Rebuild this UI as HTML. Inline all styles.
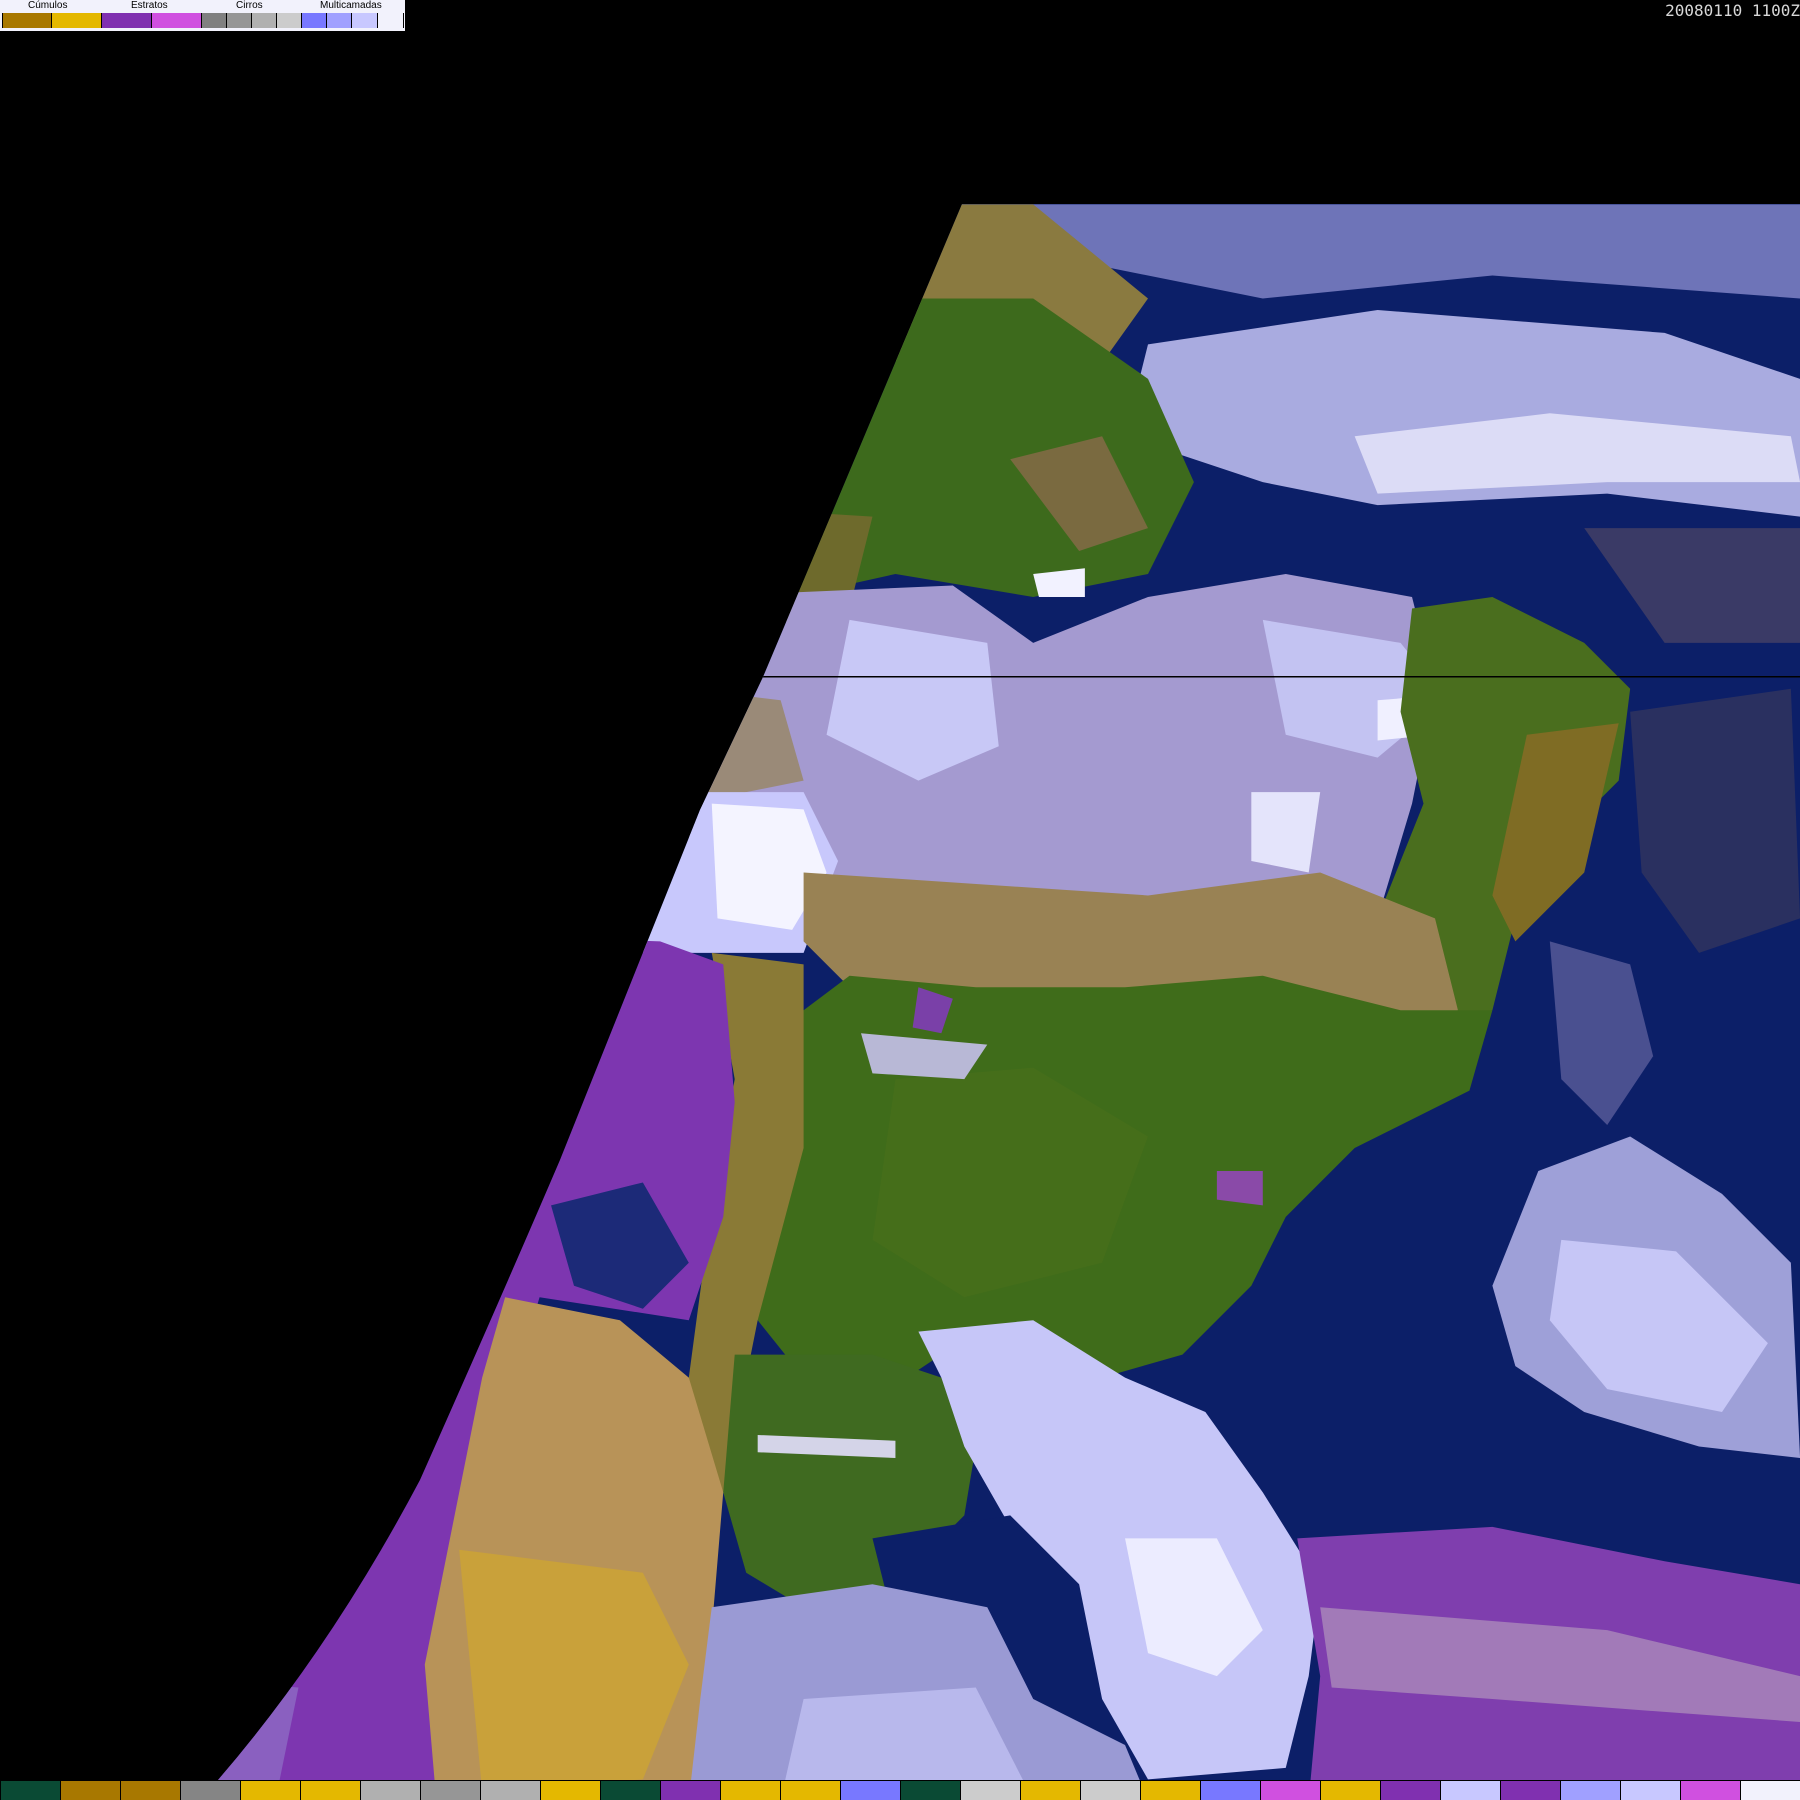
<!DOCTYPE html>
<html><head><meta charset="utf-8"><style>
html,body{margin:0;padding:0;background:#000;width:1800px;height:1800px;overflow:hidden;font-family:"Liberation Sans",sans-serif}
#legend{position:absolute;left:0;top:0;width:405px;height:31px;background:#f2f2fc}
#legend .t{position:absolute;top:0;font-size:10px;color:#000}
#legend .sw{position:absolute;top:13px;height:15px;border-left:1px solid #000}
#bar{position:absolute;left:0;top:1781px;width:1800px;height:19px;display:flex}
#bar div{width:60px;height:19px;box-sizing:border-box;border-left:1px solid #000}
#date{position:absolute;right:0;top:1px;color:#d8d8d8;font-family:"DejaVu Sans Mono","Liberation Mono",monospace;font-size:16px}
svg{position:absolute;left:0;top:0}
</style></head><body>
<svg width="1800" height="1800" viewBox="0 0 1800 1800">
<defs>
<clipPath id="c"><path d="M962,204 L1800,204 L1800,1780 L218,1780 Q330,1650 420,1480 Q500,1300 560,1160 Q620,1010 700,810 L763,677 Z"/></clipPath>
</defs>
<g clip-path="url(#c)">
<g transform="scale(1.148)">
<rect x="0" y="0" width="1568" height="1568" fill="#0c1f68"/>
<path d="M838,178 L1568,178 L1568,260 L1300,240 L1100,260 L950,230 L880,260 Z" fill="#6e74b8"/>
<path d="M1000,300 L1200,270 L1450,290 L1568,330 L1568,450 L1400,430 L1200,440 L1100,420 L980,380 Z" fill="#a9abe0"/>
<path d="M1180,380 L1350,360 L1560,380 L1568,420 L1400,420 L1200,430 Z" fill="#dcdcf6"/>
<path d="M700,178 L900,178 L1000,260 L950,330 L870,330 L700,300 Z" fill="#8a7a40"/>
<path d="M600,260 L900,260 L1000,330 L1040,420 L1000,500 L900,520 L780,500 L600,540 Z" fill="#3d6a1c"/>
<path d="M600,440 L760,450 L740,530 L600,560 Z" fill="#6e6a2c"/>
<path d="M880,400 L960,380 L1000,460 L940,480 Z" fill="#7a6a40"/>
<path d="M600,520 L830,510 L900,560 L1000,520 L1120,500 L1230,520 L1250,600 L1230,700 L1200,800 L1100,830 L980,820 L850,790 L760,800 L600,760 Z" fill="#a49ad0"/>
<path d="M600,600 L680,610 L700,680 L600,700 Z" fill="#9a8a78"/>
<path d="M740,540 L860,560 L870,650 L800,680 L720,640 Z" fill="#c8c8f6"/>
<path d="M1100,540 L1220,560 L1260,610 L1200,660 L1120,640 Z" fill="#c3c3f2"/>
<path d="M1090,690 L1150,690 L1140,760 L1090,750 Z" fill="#e4e4fb"/>
<path d="M900,500 L945,495 L945,520 L905,520 Z" fill="#f2f2ff"/>
<path d="M1200,610 L1260,605 L1250,640 L1200,645 Z" fill="#f0f0ff"/>
<path d="M1230,530 L1300,520 L1380,560 L1420,600 L1410,680 L1350,740 L1320,800 L1300,880 L1240,890 L1200,800 L1240,700 L1220,620 Z" fill="#4a6e1e"/>
<path d="M1330,640 L1410,630 L1380,760 L1320,820 L1300,780 Z" fill="#7f6c24"/>
<path d="M560,690 L700,690 L730,750 L700,830 L560,830 Z" fill="#c8c8fc"/>
<path d="M620,700 L700,705 L720,760 L690,810 L625,800 Z" fill="#f4f4ff"/>
<path d="M700,760 L1000,780 L1150,760 L1250,800 L1270,880 L1200,900 L1100,860 L980,880 L850,870 L740,860 L700,820 Z" fill="#998254"/>
<path d="M740,850 L850,860 L980,860 L1100,850 L1220,880 L1300,880 L1280,950 L1180,1000 L1120,1060 L1090,1120 L1030,1180 L960,1200 L880,1170 L820,1180 L760,1220 L700,1200 L660,1150 L640,1050 L660,950 L700,880 Z" fill="#3f6c1a"/>
<path d="M780,940 L900,930 L1000,990 L960,1100 L840,1130 L760,1080 Z" fill="#456e1a"/>
<path d="M1060,1020 L1100,1020 L1100,1050 L1060,1045 Z" fill="#8a4aa8"/>
<path d="M750,900 L860,910 L840,940 L760,935 Z" fill="#b8b8d6"/>
<path d="M800,860 L830,870 L820,900 L795,895 Z" fill="#7a40a8"/>
<path d="M620,830 L700,840 L700,1000 L660,1150 L640,1250 L620,1350 L580,1330 L600,1200 L620,1050 L640,940 Z" fill="#8a7a36"/>
<path d="M640,1180 L760,1180 L820,1200 L850,1260 L840,1320 L800,1360 L760,1390 L700,1400 L650,1370 L630,1300 Z" fill="#3f6a20"/>
<path d="M660,1250 L780,1255 L780,1270 L660,1265 Z" fill="#d4d4e8"/>
<!-- pacific purple -->
<path d="M0,800 L575,820 L630,840 L640,960 L630,1060 L600,1150 L470,1130 L420,1300 L380,1568 L0,1568 Z" fill="#7d36b0"/>
<path d="M480,1050 L560,1030 L600,1100 L560,1140 L500,1120 Z" fill="#1c2a78"/>
<path d="M440,1130 L540,1150 L600,1200 L630,1300 L620,1420 L640,1550 L380,1568 L370,1450 L400,1300 L420,1200 Z" fill="#b89358"/>
<path d="M400,1350 L560,1370 L600,1450 L560,1550 L420,1560 Z" fill="#c9a13a"/>
<path d="M0,1450 L260,1470 L240,1568 L0,1568 Z" fill="#8a60c0"/>
<path d="M800,1160 L900,1150 L980,1200 L1050,1230 L1100,1300 L1150,1380 L1140,1460 L1120,1540 L1000,1550 L960,1480 L920,1400 L880,1330 L840,1260 L820,1200 Z" fill="#c6c6f8"/>
<path d="M980,1340 L1060,1340 L1100,1420 L1060,1460 L1000,1440 Z" fill="#ececff"/>
<path d="M760,1340 L880,1320 L940,1380 L960,1480 L900,1480 L860,1440 L780,1420 Z" fill="#0c1f68"/>
<path d="M620,1400 L760,1380 L860,1400 L900,1480 L980,1520 L1000,1568 L600,1568 L610,1480 Z" fill="#9a9ad4"/>
<path d="M700,1480 L850,1470 L900,1568 L680,1568 Z" fill="#b8b8ec"/>
<path d="M1130,1340 L1300,1330 L1450,1360 L1568,1380 L1568,1568 L1140,1568 L1150,1460 Z" fill="#7f3eae"/>
<path d="M1150,1400 L1400,1420 L1568,1460 L1568,1500 L1300,1480 L1160,1470 Z" fill="#a27ab8"/>
<path d="M1340,1020 L1420,990 L1500,1040 L1560,1100 L1568,1270 L1480,1260 L1380,1230 L1320,1190 L1300,1120 Z" fill="#9ea0d8"/>
<path d="M1360,1080 L1460,1090 L1540,1170 L1500,1230 L1400,1210 L1350,1150 Z" fill="#c6c6f6"/>
<path d="M1350,820 L1420,840 L1440,920 L1400,980 L1360,940 Z" fill="#4a5090"/>
<path d="M1420,620 L1560,600 L1568,800 L1480,830 L1430,760 Z" fill="#2a3060"/>
<path d="M1380,460 L1568,460 L1568,560 L1450,560 Z" fill="#3a3a66"/>
</g>
<rect x="763" y="676" width="1037" height="1.5" fill="#000"/>
</g>
</svg>

<div id="legend">
  <div class="t" style="left:28px">Cúmulos</div>
  <div class="t" style="left:131px">Estratos</div>
  <div class="t" style="left:236px">Cirros</div>
  <div class="t" style="left:320px">Multicamadas</div>
  <div class="sw" style="left:2px;width:49px;background:#a87800"></div>
  <div class="sw" style="left:51px;width:50px;background:#e4b800"></div>
  <div class="sw" style="left:101px;width:50px;background:#8030b0"></div>
  <div class="sw" style="left:151px;width:50px;background:#d050e0"></div>
  <div class="sw" style="left:201px;width:25px;background:#808080"></div>
  <div class="sw" style="left:226px;width:25px;background:#969696"></div>
  <div class="sw" style="left:251px;width:25px;background:#b0b0b0"></div>
  <div class="sw" style="left:276px;width:25px;background:#cccccc"></div>
  <div class="sw" style="left:301px;width:25px;background:#7878ff"></div>
  <div class="sw" style="left:326px;width:25px;background:#a0a0ff"></div>
  <div class="sw" style="left:351px;width:26px;background:#c8c8ff"></div>
  <div class="sw" style="left:377px;width:25px;background:#f2f2fc;border-right:1px solid #000"></div>
</div>
<div id="date">20080110 1100Z</div>

<div id="bar">
<div style="background:#0a4a34"></div><div style="background:#a87800"></div><div style="background:#a87800"></div><div style="background:#858585"></div><div style="background:#e4b800"></div><div style="background:#e4b800"></div><div style="background:#b0b0b0"></div><div style="background:#969696"></div><div style="background:#b0b0b0"></div><div style="background:#e4b800"></div><div style="background:#0a4a34"></div><div style="background:#8030b0"></div><div style="background:#e4b800"></div><div style="background:#e4b800"></div><div style="background:#7878ff"></div><div style="background:#0a4a34"></div><div style="background:#cccccc"></div><div style="background:#e4b800"></div><div style="background:#cccccc"></div><div style="background:#e4b800"></div><div style="background:#7878ff"></div><div style="background:#d050e0"></div><div style="background:#e4b800"></div><div style="background:#8030b0"></div><div style="background:#c8c8ff"></div><div style="background:#8030b0"></div><div style="background:#a0a0ff"></div><div style="background:#c8c8ff"></div><div style="background:#d050e0"></div><div style="background:#f2f2fc"></div>
</div>
</body></html>
